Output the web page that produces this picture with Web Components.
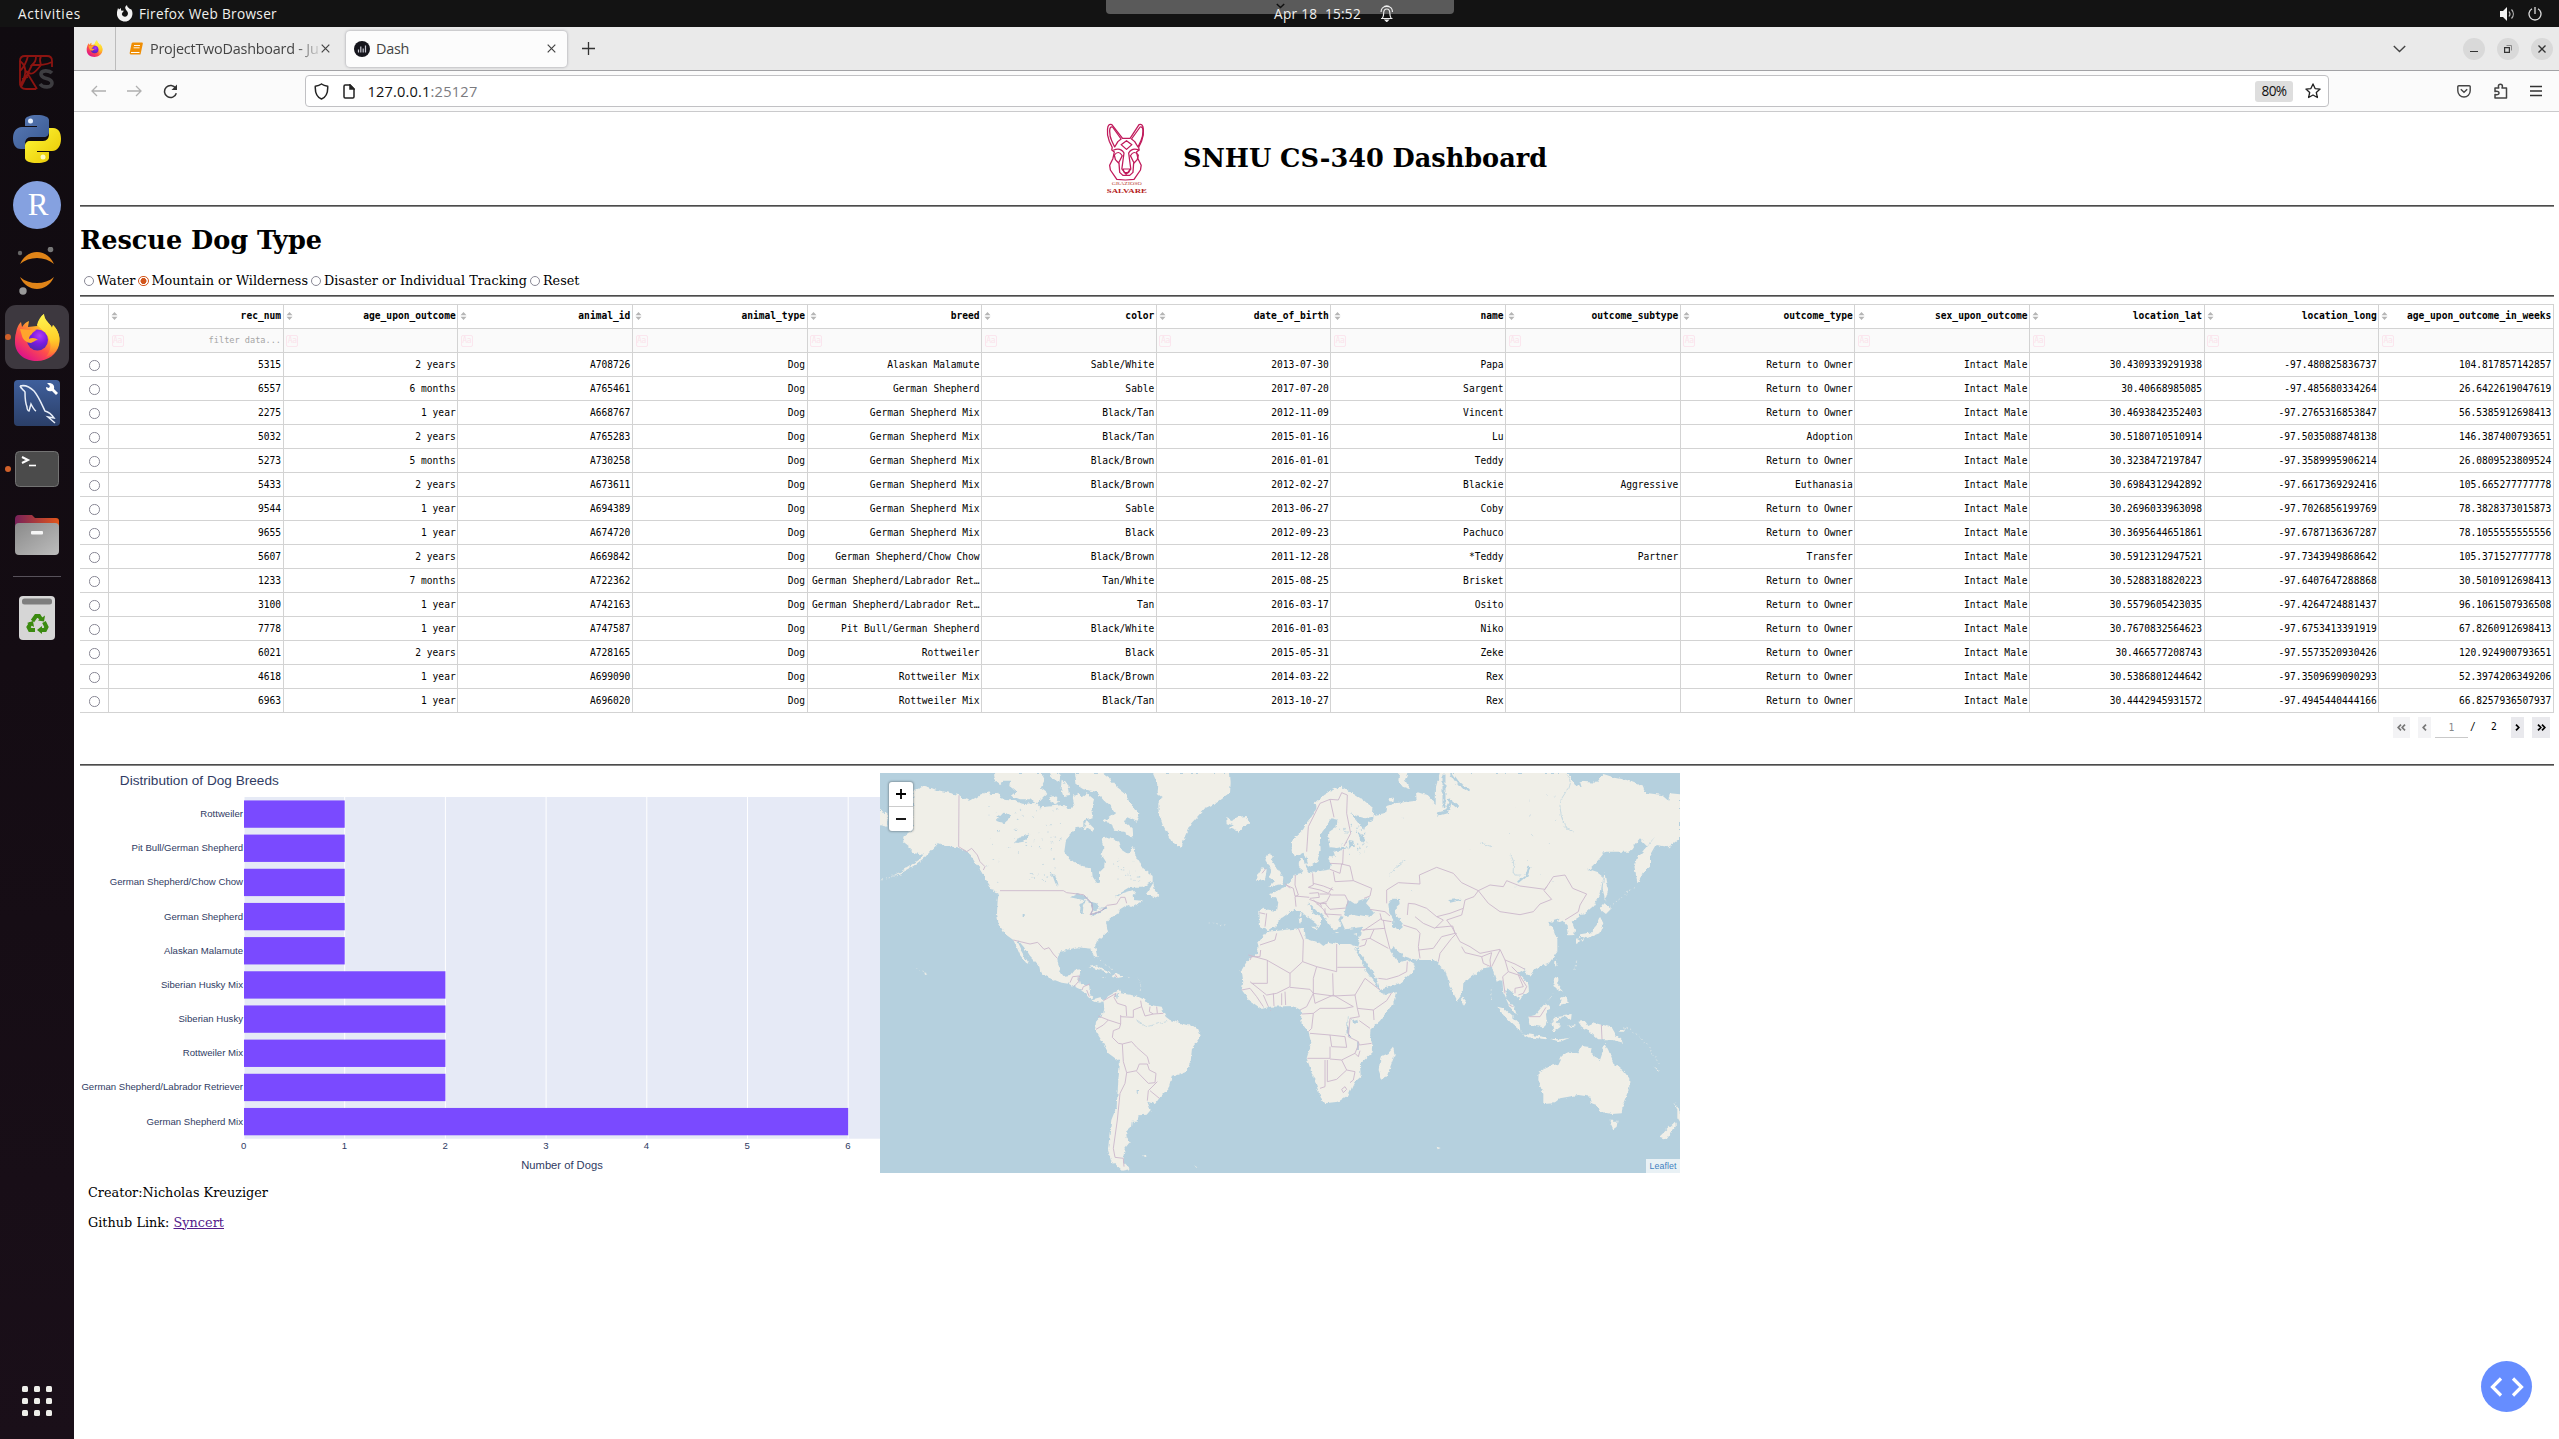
<!DOCTYPE html>
<html lang="en">
<head>
<meta charset="utf-8">
<title>Dash</title>
<style>
html,body{margin:0;padding:0;background:#fff;overflow:hidden}
body{width:2559px;height:1439px}
</style>
</head>
<body>
<ubuntu-desktop></ubuntu-desktop>
<script>
const UI = '"Open Sans","Noto Sans",sans-serif';

function define(name, render, after) {
  customElements.define(name, class extends HTMLElement {
    connectedCallback() {
      if (this.shadowRoot) return;
      const root = this.attachShadow({ mode: 'open' });
      const t = document.createElement('template');
      t.innerHTML = render(this);
      root.appendChild(t.content.cloneNode(true));
      if (after) after(this, root);
    }
  });
}

/* Text spread over a set width by its letter spacing */
define('fit-text', el => `<style>:host{display:block;width:${el.getAttribute('w')}px;white-space:pre;flex:none}span{display:inline-block}:host([underline]) span{text-decoration:underline}</style><span>${el.textContent}</span>`,
  (el, root) => {
    const s = root.querySelector('span');
    const w = +el.getAttribute('w'), n = s.textContent.length;
    s.style.letterSpacing = ((w - s.getBoundingClientRect().width) / n).toFixed(3) + 'px';
  });

const FIREFOX = `<svg viewBox="0 0 48 48">
<defs>
<linearGradient id="fx" x1=".85" y1=".1" x2=".25" y2=".95"><stop offset="0" stop-color="#fff044"/><stop offset=".35" stop-color="#ffb02a"/><stop offset=".65" stop-color="#ff4f4a"/><stop offset="1" stop-color="#e01587"/></linearGradient>
<linearGradient id="fy" x1=".5" y1="0" x2=".6" y2="1"><stop offset="0" stop-color="#fff44f"/><stop offset=".6" stop-color="#ffd02a"/><stop offset="1" stop-color="#ff9a1f" stop-opacity=".2"/></linearGradient>
<radialGradient id="fp" cx=".6" cy=".3" r=".75"><stop offset="0" stop-color="#b23cf5"/><stop offset=".5" stop-color="#7a1be0"/><stop offset="1" stop-color="#4b2ba8"/></radialGradient>
</defs>
<path fill="url(#fx)" d="M3 20C4 14 6 11 8 9l1 5c2-3 4-5 7-6l-1 6c3 0 6-1 9-1 2-4 3-9 7-12 0 5 4 8 7 12l1 2 1-3c5 5 8 12 6 20-2 9-11 16-22 16C12 48 2 41 2 29c0-4 0-6 1-9Z"/>
<path fill="url(#fy)" d="M24 12C25 7 28 3 31 1c0 5 4 8 7 12l1 2 1-3c6 6 8 14 5 22-3 6-8 9-12 10 4-5 6-11 3-18-2-5-7-9-12-14Z"/>
<circle cx="24.500" cy="27" r="10.500" fill="url(#fp)"/>
<path fill="#ffa52c" d="M7 16c4 0 7 1 10 1 2-1 5-1 6 0-1 1-4 3-4 4-2 1-3 3-3 5 3-2 7-1 9 1-3 0-4 2-7 3-4 0-8-3-9-7Z"/>
</svg>`;

/* ---------- Top panel ---------- */
define('top-panel', () => `<style>
:host{display:grid;grid-template-columns:1274px 1fr 200px;height:27px;background:#131313;color:#f0f0ee;font:13.6px/27px ${UI};position:relative}
.l{display:flex;align-items:center;padding-left:18px}
.c{display:flex;align-items:center;position:relative;z-index:1}
.r{display:flex;align-items:center;justify-content:flex-end;padding-right:17px;gap:12px}
svg{display:block;flex:none}
.l svg{margin:0 6px 0 36px}
.grab{position:absolute;left:1106px;top:0;width:348px;height:14px;background:#5a5a5a;border-radius:0 0 4px 4px}
.grab svg{position:absolute;left:170px;top:3px}
</style>
<div class="grab"><svg width="9" height="6" viewBox="0 0 9 6" fill="none" stroke="#111" stroke-width="1.500"><path d="M.8 1l3.700 3.500L8.200 1"/></svg></div>
<div class="l"><fit-text w="63">Activities</fit-text>
<svg style="margin-left:35px" width="17" height="17" viewBox="0 0 17 17"><path fill="#f2f2f2" d="M1 7l1-4 1 1.600L5 3v2.500l3 .3L6.500 7.600 5.800 9c.5 2 2 2.900 3.500 2.700 2-.3 3-2 2.600-3.900C11.500 6 9.500 5 9.200 3c0-1.200.6-2.200 1.800-3 0 1.800 1.500 2.600 2.900 3.900l1.300.3c1 1.500 1.500 3.500 1.200 5.300C15.800 13.800 12.800 16.500 9 16.500S1.500 13.800 1 10Z"/></svg>
<fit-text w="138">Firefox Web Browser</fit-text></div>
<div class="c"><fit-text w="87">Apr 18  15:52</fit-text>
<svg style="margin-left:18.500px" width="13.500" height="17" viewBox="0 0 13 17" fill="none" stroke="#eee" stroke-width="1.100" preserveAspectRatio="none"><path d="M1 13.500h11M2.200 13.500c1-1.500 1.300-3 1.300-5C3.500 5.500 4.600 4 6.500 4s3 1.500 3 4.500c0 2 .3 3.500 1.300 5M1 7C1 3.500 3 1.500 6.500 1.500S12 3.500 12 7M3 2.500C4 1.300 5 .8 6.500.8S9 1.300 10 2.500"/><path d="M5 15h3l-1.500 1.600Z" fill="#fff"/></svg></div>
<div class="r">
<svg width="16" height="14" viewBox="0 0 16 14"><path fill="#f2f2f2" d="M0 4h3l4-4v14l-4-4H0Z"/><path d="M9 4.500c1.200 1.500 1.200 3.500 0 5M11.500 2.500c2.400 2.600 2.400 6.400 0 9" stroke="#bbb" fill="none" stroke-width="1.200"/></svg>
<svg width="14" height="14" viewBox="0 0 14 14" fill="none" stroke="#ddd" stroke-width="1.300"><path d="M4 1.800a6 6 0 1 0 6 0M7 0v7"/></svg>
</div>`);

/* ---------- Dock ---------- */
define('dock-item', () => `<style>
:host{display:flex;height:66px;width:74px;align-items:center;justify-content:center;flex:none;position:relative}
.tile{width:64px;height:64px;display:flex;align-items:center;justify-content:center;border-radius:11px}
:host([active]) .tile{background:#3d383f}
.dot{position:absolute;left:5px;top:30px;width:6px;height:6px;border-radius:3px;background:#d0602a;display:none}
:host([running]) .dot{display:block}
</style><div class="tile"><slot></slot></div><div class="dot"></div>`);

define('side-dock', () => `<style>
:host{display:flex;flex-direction:column;width:74px;height:1412px;box-sizing:border-box;padding-top:13px;background:linear-gradient(#100b10,#140c13 45%,#1a0f19);flex:none}
svg{display:block;width:48px;height:48px}
.sep{height:1px;background:#57515a;margin:8px 13px}
.gap{flex:1}
.apps{display:grid;grid-template-columns:repeat(3,6px);gap:6px;justify-content:center;padding-bottom:23px}
.apps i{height:6px;border-radius:1.500px;background:#eeeeea}
</style>
<dock-item><svg viewBox="0 0 48 48" fill="none"><g stroke="#8c1411" stroke-width="1.800"><path d="M39 18V12c0-3-2-5-5-5H12C9 7 7 9 7 12v22c0 4 2 6 6 6h10" /><path d="M7 12c8 6 6 16 0 24M15 7c-2 8-5 12-8 15M23 7c0 5-1 6-4 9 9 0 14 0 20-3M19 16L8 38M13 22l11 18M28 7c-2 4-1 6 0 9M13 22c5 5 8 3 15-6M9 30l6-2"/></g><path d="M39 24c-3-3-11-3-11 1 0 6 11 3 11 9 0 5-9 5-12 1" stroke="#3d3c40" stroke-width="3.600"/></svg></dock-item>
<dock-item><svg viewBox="0 0 48 48"><defs><linearGradient id="pb" x1="0" y1="0" x2="1" y2="1"><stop offset="0" stop-color="#5a7cb8"/><stop offset="1" stop-color="#38578f"/></linearGradient><linearGradient id="py" x1="0" y1="0" x2="1" y2="1"><stop offset="0" stop-color="#fffa3a"/><stop offset="1" stop-color="#e8c400"/></linearGradient></defs><path fill="url(#pb)" d="M12 5c0-3 5-5 12-5s12 2 12 5v12c0 3-2 5-5 5H18c-4 0-6 3-6 7v5H8c-6 0-8-5-8-11s3-11 9-11h15v-1H12Z"/><path fill="url(#py)" d="M36 43c0 3-5 5-12 5s-12-2-12-5V31c0-3 2-5 5-5h13c4 0 6-3 6-7v-6h4c6 0 8 5 8 11s-3 12-9 12H24v1h12Z"/><circle cx="17.500" cy="6" r="2.500" fill="#e8f2ff"/><circle cx="30" cy="42" r="2.500" fill="#fffbc0"/></svg></dock-item>
<dock-item><svg viewBox="0 0 48 48"><circle cx="24" cy="24" r="24" fill="#85a1e0"/><text x="25" y="34" text-anchor="middle" font-family="Liberation Serif,serif" font-size="31" fill="#fff">R</text></svg></dock-item>
<dock-item><svg viewBox="0 0 48 48"><path fill="#e08418" d="M7 17C14 1 34 1 41 17 32 9 16 9 7 17ZM7 30c7 16 27 16 34 0-9 8-25 8-34 0Z"/><circle cx="7" cy="6" r="2.200" fill="#666"/><circle cx="37.500" cy="2.500" r="2.800" fill="#777"/><circle cx="10" cy="44" r="3.700" fill="#999"/></svg></dock-item>
<dock-item active running>${FIREFOX}</dock-item>
<dock-item><svg viewBox="0 0 48 48"><defs><linearGradient id="mq" x1="0" y1="0" x2="0" y2="1"><stop offset="0" stop-color="#3f5f9c"/><stop offset="1" stop-color="#2b3f68"/></linearGradient></defs><rect x="1" y="1" width="46" height="46" rx="4" fill="url(#mq)"/><path d="M7 7c4-1 9 0 14 5 5 6 8 14 11 20 4 1 7 4 9 7l-6-1 7 6M7 7c1 3 4 4 5 6 0 5 0 10 2 15 0 2 1 4 2 4l2-7c2 4 3 6 5 7M7 7l3 4" fill="none" stroke="#e8eef8" stroke-width="1.500"/><path d="M34 4l3 3-1 2-3-1c0 4 3 5 6 4l4 4 2-2-4-4c1-4-2-6-5-6Z" fill="#fff"/></svg></dock-item>
<dock-item running><svg viewBox="0 0 48 48"><rect x="2.500" y="6.500" width="43" height="35" rx="4" fill="#4b4b4b" stroke="#737373"/><path d="M9 12l6 3-6 3" fill="none" stroke="#fff" stroke-width="2"/><path d="M16 20.500h7" stroke="#fff" stroke-width="1.600"/></svg></dock-item>
<dock-item><svg viewBox="0 0 48 48"><defs><linearGradient id="fo"><stop offset="0" stop-color="#77215a"/><stop offset="1" stop-color="#e2561b"/></linearGradient><linearGradient id="fg" x1="0" y1="0" x2="1" y2="1"><stop offset="0" stop-color="#8a8a8a"/><stop offset="1" stop-color="#bdbdbd"/></linearGradient></defs><path d="M2 20V8c0-2 1-4 4-4h13l3 3h21c2 0 3 1 3 3v12Z" fill="url(#fo)"/><rect x="2" y="12" width="44" height="32" rx="4" fill="url(#fg)"/><rect x="18" y="20" width="12" height="3.500" rx="1" fill="#f6f6f6"/></svg></dock-item>
<div class="sep"></div>
<dock-item><svg viewBox="0 0 48 48"><rect x="6" y="2" width="36" height="44" rx="4" fill="#d6d6d6"/><rect x="9" y="4.500" width="30" height="6" rx="2.500" fill="#7e7e7e"/><g fill="none" stroke="#3b8a10" stroke-width="4"><path d="M19.500 27l3.500-5h3l2 3M31 28l2.500 5-1.500 3h-4M22 36h-5l-1.500-3 2.500-4"/></g><g fill="#3b8a10"><path d="M25 26.500l6 1 1-6ZM29 32v8l-5-4ZM14 29l6-2 1 6Z"/></g></svg></dock-item>
<div class="gap"></div>
<div class="apps">${'<i></i>'.repeat(9)}</div>`);

/* ---------- Browser chrome ---------- */
const X = '<svg class="x" width="9" height="9" viewBox="0 0 9 9" stroke="#444" stroke-width="1.200"><path d="M.7.7l7.600 7.600M8.300.7L.7 8.300"/></svg>';
define('browser-tabs', () => `<style>
:host{display:flex;height:43px;background:#eaeaea;border-bottom:1px solid #a3a3a6;color:#444;font:14.400px/22px ${UI};align-items:center;position:relative}
svg{display:block;flex:none}
.pin{width:42px;height:43px;border-right:1px solid #bcbcbc;display:flex;align-items:center;justify-content:center;box-sizing:border-box}
.pin svg{width:17px;height:17px}
.tab{display:flex;align-items:center;box-sizing:border-box}
.t1{width:222px;padding-left:13px;margin-right:8px}
.t1 .n{width:169px;margin-left:7px;-webkit-mask-image:linear-gradient(90deg,#000 86%,rgba(0,0,0,.15));color:#444}
.t1 .x{margin-left:2px}
.t2{width:221px;height:36px;background:#fcfcfc;border-radius:4px;box-shadow:0 0 3px #9a9aa0;padding-left:8px}
.t2 fit-text{margin-left:6px}.t2 .x{margin-left:138px}
.plus{margin-left:15px}
.end{margin-left:auto;display:flex;align-items:center;padding-right:6px}
.b{width:22px;height:22px;border-radius:11px;background:#d9d9d9;display:flex;align-items:center;justify-content:center;margin-left:12px}
</style>
<div class="pin">${FIREFOX}</div>
<div class="tab t1"><svg width="14" height="14" viewBox="0 0 14 14"><path d="M4 .5h9a1 1 0 0 1 .8 1.200L11.500 12.500H2.200A1.500 1.500 0 0 1 .7 10.800L2.600 1.600A1.500 1.500 0 0 1 4 .5Z" fill="#ef8e05"/><path d="M5 3.500h6M4.600 5.800h6" stroke="#fff" stroke-width=".9"/><path d="M2 10.500h8.500" stroke="#fff"/></svg>
<div class="n"><fit-text w="168.500">ProjectTwoDashboard - Ju</fit-text></div>${X}</div>
<div class="tab t2"><svg width="16" height="16" viewBox="0 0 16 16"><circle cx="8" cy="8" r="8" fill="#15151c"/><path d="M4.500 11.500v-3M6.800 11.500v-6M9.200 11.500v-4M11.500 11.500v-7" stroke="#c9c9d2" stroke-width="1.200"/></svg><fit-text w="33">Dash</fit-text>${X}</div>
<svg class="plus" width="13" height="13" viewBox="0 0 13 13" stroke="#333" stroke-width="1.300"><path d="M6.500 0v13M0 6.500h13"/></svg>
<div class="end"><svg width="13" height="8" viewBox="0 0 13 8" fill="none" stroke="#444" stroke-width="1.400" style="margin-right:45px"><path d="M.8 1l5.700 5.500L12.200 1"/></svg>
<div class="b"><svg width="8" height="8" viewBox="0 0 8 8"><path d="M0 6.500h8" stroke="#333"/></svg></div>
<div class="b"><svg width="8" height="8" viewBox="0 0 8 8" fill="none"><path d="M2.500.5h5v5" stroke="#8a8a8a"/><path d="M.6 2.600h4.800v4.800H.6Z" stroke="#333" stroke-width="1.200"/></svg></div>
<div class="b"><svg width="8" height="8" viewBox="0 0 8 8" stroke="#333" stroke-width="1.300"><path d="M.5.5l7 7M7.500.5l-7 7"/></svg></div></div>`);

define('browser-toolbar', () => `<style>
:host{display:flex;height:40px;background:#fbfbfb;border-bottom:1px solid #cacacc;align-items:center;font:14.600px/22px ${UI};color:#111}
svg{display:block;flex:none}
.nav{display:flex;gap:21px;padding-left:16.500px;width:231px;box-sizing:border-box;align-items:center}
.url{width:2024px;height:32px;box-sizing:border-box;border:1px solid #c1c1c4;border-radius:4px;background:#fff;display:flex;align-items:center;padding-left:8px}
.g{color:#7b7b7f}
.badge{margin-left:auto;background:#dedede;border-radius:3px;width:38px;height:21px;line-height:20px;font-size:13.600px;display:flex;justify-content:center}
.end{display:flex;align-items:center;margin-left:auto;padding-right:17px;gap:22.500px}
</style>
<div class="nav">
<svg width="15" height="12" viewBox="0 0 15 12" fill="none" stroke="#b0b0b0" stroke-width="1.300"><path d="M15 6H1M6 1L1 6l5 5"/></svg>
<svg width="15" height="12" viewBox="0 0 15 12" fill="none" stroke="#b0b0b0" stroke-width="1.300"><path d="M0 6h14M9 1l5 5-5 5"/></svg>
<svg width="15" height="15" viewBox="0 0 15 15" fill="none" stroke="#333" stroke-width="1.500"><path d="M12.700 4.500A6 6 0 1 0 13.300 9.200"/><path d="M14 .5V6H8.500Z" fill="#333" stroke="none"/></svg>
</div>
<div class="url">
<svg width="15" height="17" viewBox="0 0 15 17" fill="none" stroke="#222" stroke-width="1.500"><path d="M7.500 1c2 1.500 4 2 6.200 2.300C14 9 12.500 14 7.500 16 2.500 14 1 9 1.300 3.300 3.500 3 5.500 2.500 7.500 1Z"/></svg>
<svg style="margin:0 12.500px 0 14px" width="12" height="15" viewBox="0 0 12 15" fill="none" stroke="#222" stroke-width="1.500"><path d="M7 1H2.200A1.200 1.200 0 0 0 1 2.200v10.600A1.200 1.200 0 0 0 2.200 14h7.600a1.200 1.200 0 0 0 1.200-1.200V5Z"/><path d="M7 1v4h4Z" fill="#222"/></svg>
<fit-text w="63">127.0.0.1</fit-text><fit-text class="g" w="47">:25127</fit-text>
<div class="badge"><fit-text w="25">80%</fit-text></div>
<svg style="margin:0 7px 0 12px" width="16" height="16" viewBox="0 0 16 16" fill="none" stroke="#222" stroke-width="1.300" stroke-linejoin="round"><path d="M8 .9l2.100 4.700 5 .5-3.800 3.400 1.100 5L8 12l-4.400 2.500 1.100-5L.9 6.100l5-.5Z"/></svg>
</div>
<div class="end">
<svg width="14" height="13" viewBox="0 0 14 13" fill="none" stroke="#444" stroke-width="1.400"><path d="M1.800 .8h10.400a1 1 0 0 1 1 1v4a6.200 6.200 0 0 1-12.400 0v-4a1 1 0 0 1 1-1Z"/><path d="M3.800 4.300L7 7.300l3.200-3"/></svg>
<svg width="14" height="16" viewBox="0 0 14 16" fill="none" stroke="#444" stroke-width="1.500" stroke-linejoin="round"><path d="M1 5h3.800c-.3-.7-.4-1.200-.4-1.700a2 2 0 0 1 4 0c0 .5-.1 1-.4 1.700h4.500v10H1v-3.500c3 .9 4-.5 4-1.500s-1-2.300-4-1.500Z"/></svg>
<svg width="12" height="12" viewBox="0 0 12 12" stroke="#333" stroke-width="1.300"><path d="M0 1.500h12M0 6h12M0 10.500h12"/></svg>
</div>`);

/* ---------- Page header ---------- */
define('salvare-logo', () => `<style>:host{display:block;width:43px;height:73px;flex:none}svg{display:block}</style>
<svg width="43" height="73" viewBox="183 363 120 219" preserveAspectRatio="none"><g fill="none" stroke="#c01a5b" stroke-width="3.600" stroke-linejoin="round">
<path d="M232 412L202 371q-11-4-12 14-2 18 5 36l8 18-1 8 7 6-4 20-9 20 2 14 18 28 24 2 24-2 18-28 2-14-9-20-4-20 7-6-1-8 8-18q7-18 5-36-1-18-12-14L253 412Z"/>
<path d="M228 414L204 378q-8-2-8 12 0 18 6 30l8 18 9-16ZM257 414l24-36q8-2 8 12 0 18-6 30l-8 18-9-16Z"/>
<path d="M243 419l15 12-15 14-15-14ZM206 448q20-10 30 8l-6 48 12 16 13-16-6-48q10-18 30-8M209 462q12-16 22 2l-10 22-9-10ZM276 462q-12-16-22 2l10 22 9-10Z"/>
<path d="M222 486l2 28 9 9h19l9-9 2-28M233 504h20l-4 11h-12Z"/></g>
<text x="202" y="552.500" font-family="Liberation Serif,serif" font-size="11.500" textLength="84" lengthAdjust="spacingAndGlyphs" fill="#bb3d37">GRAZIOSO</text>
<text x="188" y="576" font-family="Liberation Serif,serif" font-weight="bold" font-size="20" textLength="112" lengthAdjust="spacingAndGlyphs" fill="#b5201c">SALVARE</text></svg>`);

/* ---------- Radio ---------- */
define('radio-dot', () => `<style>
:host{display:block;width:10.400px;height:10.400px;box-sizing:border-box;border:1px solid #8a8996;border-radius:50%;background:#fff;flex:none}
:host([checked]){border:1.600px solid #d2561c;background:radial-gradient(circle,#d2561c 2.700px,#fff 3.300px)}
</style>`);

define('rescue-filter', () => `<style>
:host{display:flex;align-items:center;height:20px;font:12.800px/20px "DejaVu Serif",serif;color:#000}
radio-dot{margin:1px 2.600px 0 3px}
radio-dot:first-of-type{margin-left:4px}
</style>
<radio-dot></radio-dot><fit-text w="38.500">Water</fit-text>
<radio-dot checked></radio-dot><fit-text w="156.500">Mountain or Wilderness</fit-text>
<radio-dot></radio-dot><fit-text w="203">Disaster or Individual Tracking</fit-text>
<radio-dot></radio-dot><fit-text w="36.500">Reset</fit-text>`);

/* ---------- Data table ---------- */
const COLS = ['rec_num','age_upon_outcome','animal_id','animal_type','breed','color','date_of_birth','name','outcome_subtype','outcome_type','sex_upon_outcome','location_lat','location_long','age_upon_outcome_in_weeks'];
const GS = 'German Shepherd', R = 'Return to Owner';
const ROWS = [
['5315','2 years','A708726','Alaskan Malamute','Sable/White','2013-07-30','Papa','',R,'30.4309339291938','-97.480825836737','104.817857142857'],
['6557','6 months','A765461',GS,'Sable','2017-07-20','Sargent','',R,'30.40668985085','-97.485680334264','26.6422619047619'],
['2275','1 year','A668767',GS+' Mix','Black/Tan','2012-11-09','Vincent','',R,'30.4693842352403','-97.2765316853847','56.5385912698413'],
['5032','2 years','A765283',GS+' Mix','Black/Tan','2015-01-16','Lu','','Adoption','30.5180710510914','-97.5035088748138','146.387400793651'],
['5273','5 months','A730258',GS+' Mix','Black/Brown','2016-01-01','Teddy','',R,'30.3238472197847','-97.3589995906214','26.0809523809524'],
['5433','2 years','A673611',GS+' Mix','Black/Brown','2012-02-27','Blackie','Aggressive','Euthanasia','30.6984312942892','-97.6617369292416','105.665277777778'],
['9544','1 year','A694389',GS+' Mix','Sable','2013-06-27','Coby','',R,'30.2696033963098','-97.7026856199769','78.3828373015873'],
['9655','1 year','A674720',GS+' Mix','Black','2012-09-23','Pachuco','',R,'30.3695644651861','-97.6787136367287','78.1055555555556'],
['5607','2 years','A669842',GS+'/Chow Chow','Black/Brown','2011-12-28','*Teddy','Partner','Transfer','30.5912312947521','-97.7343949868642','105.371527777778'],
['1233','7 months','A722362',GS+'/Labrador Ret…','Tan/White','2015-08-25','Brisket','',R,'30.5288318820223','-97.6407647288868','30.5010912698413'],
['3100','1 year','A742163',GS+'/Labrador Ret…','Tan','2016-03-17','Osito','',R,'30.5579605423035','-97.4264724881437','96.1061507936508'],
['7778','1 year','A747587','Pit Bull/'+GS,'Black/White','2016-01-03','Niko','',R,'30.7670832564623','-97.6753413391919','67.8260912698413'],
['6021','2 years','A728165','Rottweiler','Black','2015-05-31','Zeke','',R,'30.466577208743','-97.5573520930426','120.924900793651'],
['4618','1 year','A699090','Rottweiler Mix','Black/Brown','2014-03-22','Rex','',R,'30.5386801244642','-97.3509699090293','52.3974206349206'],
['6963','1 year','A696020','Rottweiler Mix','Black/Tan','2013-10-27','Rex','',R,'30.4442945931572','-97.4945440444166','66.8257936507937']
].map(r => [...r.slice(0,3),'Dog',...r.slice(3,9),'Intact Male',...r.slice(9)]);

define('animal-table', () => `<style>
:host{display:block;width:2474px;border-top:1px solid #d3d3d3;font:9.600px/24px "DejaVu Sans Mono",monospace;color:#000}
.row{display:grid;grid-template-columns:29px repeat(14,1fr);height:24px;box-sizing:border-box;border-bottom:1px solid #d3d3d3}
.row>*{border-right:1px solid #d3d3d3;box-sizing:border-box;display:flex;align-items:center;padding:0 1.600px;min-width:0;white-space:pre;line-height:23px;height:23px}
.row>*>b,.row>*>span{margin-left:auto;font-weight:inherit}
.row>:first-child{justify-content:center}
.h{font-weight:bold}.h>*{line-height:23px;padding-bottom:2px}
.f{background:#fafafa;color:#a5a5a5}.f>*{padding-bottom:1px}.f span{font-size:8.600px}
radio-dot{margin-top:2px}
.row>:first-child{padding:0 0 0 1px}
svg{display:block;flex:none}
.s{margin-left:.5px}
.aa{width:12px;height:12px;box-sizing:border-box;border:1px solid #fbe6ee;border-radius:2px;color:#fae3eb;font:8px/10px "DejaVu Sans Mono",monospace;text-align:center;margin:1px 0 0 1px;letter-spacing:-.3px}
</style>
<div class="row h"><div></div>${COLS.map(c => `<div><svg class="s" width="7" height="8" viewBox="0 0 7 8" fill="#b5b5b5"><path d="M3.500 0L6.500 3.300H.5ZM.5 4.700h6L3.500 8Z"/></svg><b>${c}</b></div>`).join('')}</div>
<div class="row f"><div></div>${COLS.map((c,i) => `<div><div class="aa">Aa</div>${i ? '' : '<span>filter data...</span>'}</div>`).join('')}</div>
${ROWS.map(r => `<div class="row"><div><radio-dot></radio-dot></div>${r.map(v => `<div><span>${v}</span></div>`).join('')}</div>`).join('')}`);

define('table-pager', () => `<style>
:host{display:flex;justify-content:flex-end;height:21px;padding-right:4px;font:9.600px/20px "DejaVu Sans Mono",monospace;align-items:stretch;width:2474px;box-sizing:border-box}
.b{background:#e9e9ed;display:flex;align-items:center;justify-content:center;width:13px}
.w{width:18px}
.d{background:#f3f3f5}
.in{width:33px;border-bottom:1px solid #c9c9c9;margin-left:4px;text-align:center;color:#888;height:20px;line-height:22px}
</style>
<div class="b d" style="width:17px"><svg width="9" height="7" viewBox="0 0 9 7" fill="none" stroke="#777" stroke-width="1.700"><path d="M4 .6L1.200 3.500 4 6.400M8 .6L5.200 3.500 8 6.400"/></svg></div>
<div class="b d" style="margin-left:8px"><svg width="5" height="7" viewBox="0 0 5 7" fill="none" stroke="#777" stroke-width="1.700"><path d="M4 .6L1.200 3.500 4 6.400"/></svg></div>
<div class="in">1</div><div style="margin-left:2px;width:6px">/</div><div style="margin:0 14px 0 15px;width:6px">2</div>
<div class="b"><svg width="5" height="7" viewBox="0 0 5 7" fill="none" stroke="#000" stroke-width="1.700"><path d="M1 .6l2.800 2.900L1 6.400"/></svg></div>
<div class="b w" style="margin-left:8px"><svg width="9" height="7" viewBox="0 0 9 7" fill="none" stroke="#000" stroke-width="1.700"><path d="M1 .6l2.800 2.900L1 6.400M5 .6l2.800 2.900L5 6.400"/></svg></div>`);

/* ---------- Bar chart ---------- */
const BREEDS = [['Rottweiler',1],['Pit Bull/German Shepherd',1],['German Shepherd/Chow Chow',1],['German Shepherd',1],['Alaskan Malamute',1],['Siberian Husky Mix',2],['Siberian Husky',2],['Rottweiler Mix',2],['German Shepherd/Labrador Retriever',2],['German Shepherd Mix',6]];
define('breed-chart', () => {
  const x0 = 164, step = 100.7, top = 24, rh = 34.17;
  return `<style>:host{display:block;width:800px;height:400px;flex:none}svg{display:block}text{font-family:"Liberation Sans",Arial,sans-serif;fill:#303b63}</style>
<svg width="800" height="400"><rect x="164" y="${top}" width="636" height="341.700" fill="#e6eaf6"/>
${[0,1,2,3,4,5,6].map(i => `<path d="M${x0+i*step} ${top}v341.700" stroke="#fff" stroke-width="1"/>`).join('')}
${BREEDS.map(([n,v],i) => `<rect x="${x0}" y="${(top+rh*i+rh*.1).toFixed(2)}" width="${v*step}" height="${(rh*.8).toFixed(2)}" fill="#7a4aff"/><text x="163" y="${(top+rh*(i+.5)+3).toFixed(2)}" font-size="9.600" text-anchor="end">${n}</text>`).join('')}
${[0,1,2,3,4,5,6].map(i => `<text x="${x0+i*step-.3}" y="375.600" font-size="9.600" text-anchor="middle">${i}</text>`).join('')}
<text x="39.800" y="12" font-size="13.600" textLength="159">Distribution of Dog Breeds</text>
<text x="482" y="395.500" font-size="11.200" text-anchor="middle" textLength="81.500">Number of Dogs</text></svg>`;
});

/* ---------- World map ---------- */
/* Shapes are kept in thirds of a pixel; the eastern sheet starts 1200 units after the western one. */
const WEST = `30,145 40,158 52,160 52,200 30,196
130,90 145,86 158,76 178,82 200,90 232,97 268,106 285,118 300,122 320,112 330,104 355,94 362,106 385,98 392,118 430,122 460,132 500,128 512,142 550,138 580,135 600,150 612,130 608,112 622,98 635,112 650,100 672,118 664,150 668,172 640,180 640,200 620,205 600,225 588,240 583,275 598,298 620,308 640,322 665,325 668,350 680,368 690,362 690,335 705,320 708,305 695,285 700,265 695,235 720,232 745,245 752,268 770,280 780,280 788,260 800,295 820,325 848,348 848,365 820,380 780,380 750,398 735,415 758,400 790,390 798,398 788,408 790,420 820,422 790,440 775,432 750,448 745,460 720,475 708,488 714,515 680,545 675,560 683,595 672,590 664,566 620,562 600,568 570,575 562,600 568,630 580,648 600,645 612,630 635,628 625,655 630,672 658,678 660,705 670,718 690,712 704,722 690,728 675,725 655,712 640,692 622,684 600,672 575,668 540,655 512,640 508,620 480,590 462,562 448,545 440,545 452,570 464,590 480,614 468,608 450,585 440,562 430,540 405,522 385,490 381,460 383,420 386,402 362,380 345,355 325,325 302,285 285,270 260,262 225,258 205,250 185,270 165,292 130,318 90,340 62,350 90,336 122,316 150,298 160,284 125,278 125,265 100,245 100,230 118,215 130,210
372,39 375,60 390,72 405,62 420,62 418,78 440,95 425,108 450,118 480,118 500,132 520,110 532,100 512,85 524,60 515,39
540,39 550,60 568,66 572,45 565,39
575,62 595,75 600,105 580,108 572,85
615,39 620,75 640,88 680,95 700,120 722,140 735,160 700,185 725,190 732,212 760,215 790,235 788,205 765,185 772,172 800,185 808,160 780,130 765,100 740,80 715,50 700,39
535,112 555,108 570,125 550,135
640,112 655,105 665,130 640,160
650,180 662,195 672,205 668,215 650,205 640,210
848,39 862,70 860,100 876,112 865,130 866,160 880,200 905,245 935,265 942,235 962,192 1005,145 1040,128 1080,100 1082,70 1080,39
1068,172 1085,180 1105,170 1130,168 1137,188 1105,215 1080,205 1088,196 1070,190
826,405 840,385 850,368 855,392 868,408 860,415 845,405
353,374 372,384 390,402 370,395
652,622 680,616 720,636 722,642 698,632 670,624
725,648 740,640 762,650 742,654 728,652
695,650 708,652 700,654
770,649 780,650 775,654
700,722 715,708 738,695 750,690 752,700 800,708 825,720 838,735 875,740 887,770 900,780 950,795 968,797 985,808 992,828 966,865 962,905 948,936 905,952 895,985 870,1012 855,1032 832,1025 842,1050 830,1064 805,1066 803,1085 785,1085 783,1102 768,1115 770,1130 780,1145 765,1165 760,1190 763,1208 782,1227 755,1232 725,1205 714,1170 718,1130 724,1080 740,1040 745,960 750,905 715,880 700,850 675,810 678,785 700,760 703,740
1196,280 1212,290 1205,300 1218,320 1240,352 1238,372 1195,380 1212,362 1197,352 1205,332 1186,300
1162,345 1175,325 1190,328 1186,358 1162,364
815,1190 832,1187 828,1194
163,637 172,643 165,645
972,1216 985,1224 980,1224`;
const EAST = `-32,450 -20,446 18,453 22,425 15,412 0,410 -2,402 25,392 48,378 65,362 72,345 95,338 100,332 87,322 86,305 100,293 105,318 115,335 130,338 155,332 182,328 185,314 175,300 178,288 195,290 190,275 218,270 235,258 200,264 180,262 174,240 178,215 200,200 202,182 182,178 165,205 150,225 150,245 152,270 142,305 118,320 108,290 100,278 75,290 65,270 66,240 100,208 112,185 128,165 140,140 130,132 160,105 190,88 215,80 245,98 280,120 310,145 308,170 285,175 250,165 240,158 265,190 282,208 295,188 310,178 310,165 345,160 350,138 375,130 440,122 438,95 470,105 497,132 498,80 510,39 895,39 915,75 935,82 930,65 980,68 1000,42 1040,55 1070,60 1120,80 1125,98 1175,105 1195,122 1200,100 1230,103 1230,235 1195,262 1160,255 1140,290 1140,320 1118,338 1103,370 1093,322 1100,295 1120,275 1140,250 1155,230 1130,258 1110,238 1095,255 1080,275 1005,275 985,300 955,330 985,340 1000,352 992,400 970,438 945,460 930,462 928,470 905,485 915,510 912,525 897,526 893,500 878,482 862,490 868,475 850,480 838,490 848,502 862,540 862,575 835,612 805,622 790,630 775,650 765,628 742,640 775,670 777,695 748,718 730,700 712,685 705,712 735,745 740,768 718,738 700,700 697,660 680,668 665,620 640,625 580,668 578,700 562,722 540,680 525,630 510,620 495,600 450,600 430,598 400,588 370,562 360,572 385,608 412,600 438,618 425,640 392,668 330,690 322,660 290,610 268,575 262,560 272,515 280,500 225,508 212,480 225,472 212,468 205,480 215,495 195,510 180,500 160,465 140,452 115,430 125,455 155,475 150,490 142,502 138,488 105,465 92,452 75,450 52,462 30,478 15,502 -8,510 -30,502
-10,515 25,512 85,505 100,505 105,535 150,550 160,558 175,545 200,552 240,552 262,560 256,570 268,590 290,635 318,672 328,695 345,702 378,697 370,730 330,782 302,808 300,825 307,850 305,880 270,912 272,950 252,968 235,1005 205,1025 165,1030 152,1012 130,950 110,895 124,850 115,815 95,790 92,750 70,738 0,740 -25,747 -60,722 -85,690 -80,665 -85,630 -70,605 -38,578 -38,552
370,862 374,885 350,950 335,957 326,930 332,890 355,880
577,710 590,725 582,737 576,728
1003,430 1025,445 1008,462 990,448
990,470 1000,490 988,520 950,535 935,530 920,538 935,522 960,518 980,495
918,535 930,542 924,552 918,548
930,540 942,535 940,542
1003,335 1008,365 1015,390 1005,422 998,385
860,598 862,608 855,622 852,612
775,640 790,640 780,650
853,650 865,655 865,680 880,695 868,690 850,678
866,715 890,708 893,730 870,735 875,722
850,700 832,725 848,706
682,740 700,745 752,792 754,815 730,795 700,765
752,820 790,826 830,832 830,838 775,832
840,836 870,838 900,833 870,845
775,770 795,765 825,730 840,742 828,762 830,785 820,802 782,795
845,790 855,772 882,768 858,784 872,800 852,815
925,785 945,782 955,798 975,788 1025,802 1040,828 1060,848 1018,838 985,838 955,812 935,800
1045,815 1070,800 1062,815
880,765 905,762 903,780
893,800 918,795 910,802
806,935 830,920 865,912 880,882 900,875 920,880 935,858 965,862 962,880 990,900 997,880 1003,848 1015,870 1030,908 1060,932 1078,955 1078,985 1058,1035 1055,1060 1025,1062 990,1055 980,1035 965,1030 962,1010 925,1005 870,1015 850,1030 820,1032 820,1005 805,960
1018,1082 1043,1082 1040,1100 1030,1108
1168,1130 1215,1085 1218,1098 1190,1138
1213,1028 1225,1045 1230,1060 1230,1085 1222,1072 1222,1050
388,39 412,39 405,60 420,88 398,80 385,62
355,115 372,113 370,125 358,124
88,455 95,458 94,468 88,466
86,475 96,474 95,490 88,490
120,500 140,500 138,508
190,517 208,520 200,522
250,522 265,518 258,525
105,310 118,312 112,322
500,1160 512,1164 503,1168
1150,918 1170,932 1162,930`;
const WEST_BORDERS = `267,106 266,260 290,275 305,265 322,285 330,305 345,320 340,330
390,392 580,392 590,398 640,404 665,430 668,450 660,464 690,455 712,436 740,432 752,412 765,412 770,430
430,540 480,552 503,547 522,568 537,563 550,582 562,595
600,668 608,650 628,648 625,665 612,680
636,690 640,680 660,672 
658,710 650,690
700,722 738,700 732,712 742,730 768,738 770,768
752,770 790,772 790,750 815,740 812,722
815,740 825,768 850,762 880,760
840,740 838,755 850,762
860,740 862,760
685,768 715,780 752,792 752,765
678,808 700,795 715,780
752,792 748,805 730,812 727,832 745,850 757,852 785,845 800,862 832,890 838,912
757,852 760,905 770,938 765,970 750,1000 742,1080 730,1165 735,1192 760,1195 762,1220
770,938 800,932 808,912 832,912 838,930 858,940 855,968 835,970 800,934
835,992 862,965
835,992 832,1022
840,992 868,1015
1190,460 1185,500
1168,458 1186,462
1176,340 1188,325
735,643 742,653
1245,370 1260,385`;
const EAST_BORDERS = `110,275 115,200 150,130 180,118 192,172
180,118 205,120 215,98 232,105 230,160 242,220 222,258
220,268 218,312 180,310
180,328 210,340 215,312 240,318 250,362 195,365 190,335
250,362 305,385 300,408 282,415
187,382 175,400 150,390 115,382 130,375 128,340
130,370 160,378 190,390
76,345 75,375 85,405 75,410 78,440
48,375 70,385 75,408 118,412
118,400 145,398 148,412 120,415
148,402 182,402 170,425 150,430 118,418
182,405 225,405 235,425 228,440
165,430 180,448 228,444
165,445 165,462 215,465
130,420 160,448 175,472
140,432 170,430
155,440 150,430
350,430 350,390 385,368 450,372 448,345 500,322 550,340 575,368 625,392 660,375 700,380 710,362 750,378 825,388 850,350 885,345 908,385 950,402 930,435 925,455 885,480
625,392 655,430 690,455 750,464 790,455 810,432 845,418 822,392 830,380
625,392 612,410 585,420 580,445 540,460 500,470 470,445 435,432 415,430 412,465
435,470 460,490 495,505 520,480 500,470
580,445 575,465 530,480 545,500 570,545 600,560 630,580 690,568 705,600
400,495 440,508 450,520 445,560 450,595
445,570 490,565 515,530 555,520 548,498 495,503
505,605 510,580 545,535 560,520
575,560 585,578 635,590 
635,590 665,578 660,600 662,620 640,610 635,590
665,620 690,570
705,600 735,612 765,628
705,600 715,635 698,650 705,700
715,635 745,645 760,680 735,685 735,700
725,620 745,640 770,680 760,700 745,705
300,448 345,455 360,468
330,460 335,480 365,485
340,480 345,510 360,568
275,510 345,505
275,540 300,535 355,565
300,535 312,508
268,560 285,555 290,540
325,655 350,658 385,648 410,635 412,605
335,475 280,512
85,505 100,540 98,605 140,620 200,635 200,552
202,622 285,622
140,620 130,655 130,700 190,708 188,640
98,605 60,640 -10,600 -65,585
-30,555 15,540 20,520
-8,600 -8,670 -55,670
-60,600 -55,590 -30,590 -28,570
60,640 60,680 20,700 -10,705 -60,665
60,682 120,688 130,700 110,740 90,750
-85,690 -60,685 -40,710 -20,740
-20,705 -5,740
10,700 12,738
35,700 35,735
45,695 47,735
130,700 135,730 190,705 250,740 225,745 150,745 130,760 95,762
190,708 255,705 285,655 330,690
255,705 262,745 310,750 350,722 365,698
310,750 312,780
262,745 268,770 240,775 235,830 265,845 268,855 305,850
130,760 125,805 115,815
120,820 180,825 185,860 230,862 225,830 180,825
180,860 180,895 112,895
180,897 215,900 255,880 265,855
172,900 172,965 200,958 230,930 215,900
230,930 255,935 250,960 240,968
165,900 165,980 150,985
255,880 265,890 270,872
215,988 225,980 230,988 220,998 215,988
268,782 300,805
994,795 996,838
778,770 810,770 828,742
718,735 728,740
1,750 2,752`;
const toPaths = s => s.trim().split('\n').map(l => 'M' + l.trim().split(/\s+/).join('L'));
function specks() {
  let s = 7, out = '';
  const rnd = () => (s = (s * 16807) % 2147483647) / 2147483647;
  for (let i = 0; i < 65; i++) {
    const x = 340 + rnd() * 230, y = 140 + rnd() * 230;
    out += `<ellipse cx="${x.toFixed(0)}" cy="${y.toFixed(0)}" rx="${(1 + rnd() * 2.5).toFixed(1)}" ry="${(.8 + rnd() * 1.4).toFixed(1)}"/>`;
  }
  for (let i = 0; i < 20; i++) out += `<ellipse cx="${(710 + rnd() * 100).toFixed(0)}" cy="${(295 + rnd() * 70).toFixed(0)}" rx="2.200" ry="1.400"/>`;
  for (let i = 0; i < 26; i++) out += `<ellipse cx="${(1410 + rnd() * 85).toFixed(0)}" cy="${(195 + rnd() * 95).toFixed(0)}" rx="2" ry="2.600"/>`;
  for (let i = 0; i < 18; i++) out += `<ellipse cx="${(1560 + rnd() * 520).toFixed(0)}" cy="${(90 + rnd() * 320).toFixed(0)}" rx="1.800" ry="1"/>`;
  return out;
}
define('world-map', () => `<style>
:host{display:block;width:800px;height:400px;flex:none;position:relative;overflow:hidden}
svg.m{display:block}
.z{position:absolute;left:9px;top:9px;width:24px;height:49px;border-radius:3px;background:#fff;box-shadow:0 0 2px 1px rgba(0,0,0,.25)}
.z div{height:24px;display:flex;align-items:center;justify-content:center}
.z div+div{border-top:1px solid #ccc}
.a{position:absolute;right:0;bottom:0;width:34px;height:14px;background:rgba(255,255,255,.7);font:8.800px/14px "Liberation Sans",Arial,sans-serif;color:#3e7fc0;display:flex;justify-content:center}
</style>
<svg class="m" width="800" height="400" viewBox="30 39 2400 1200"><defs><filter id="r" x="0" y="0" width="2450" height="1260" filterUnits="userSpaceOnUse"><feTurbulence type="fractalNoise" baseFrequency=".07" numOctaves="3" seed="4"/><feDisplacementMap in="SourceGraphic" scale="12" xChannelSelector="R" yChannelSelector="G"/></filter></defs>
<rect x="30" y="39" width="2400" height="1200" fill="#b5d0de"/>
<g filter="url(#r)"><rect x="0" y="0" width="2450" height="1260" fill="#b5d0de"/>
<g fill="#f0efe8"><path d="${toPaths(WEST).join('Z')}Z"/><path transform="translate(1200)" d="${toPaths(EAST).join('Z')}Z"/></g>
<g fill="none" stroke="#f0efe8" stroke-width="2" stroke-dasharray="4 7"><path d="M35 360L95 342M138 623l28 14M690 600l40 30M805 655q12 20 4 40M1018 485l45 12M2220 440l75-60M2120 605l-10 30M1865 680l-4 40M2260 800q60 25 90 85l20 30M2000 790l60-5M1380 480l20 10"/></g>
<g fill="#b5d0de">${specks()}
<path d="M378 182L400 158 424 165 405 188 388 186ZM435 250L445 232 484 222 460 245ZM380 165L420 175 400 192ZM545 340L556 345 566 380 556 370ZM600 412L625 400 655 415 640 420ZM630 462L632 430 648 422 640 440 638 462ZM648 422L680 430 685 445 672 455 660 430ZM662 464L690 452 690 458 668 468ZM685 445L710 440 708 446ZM1422 465L1430 432 1437 420 1455 432 1468 422 1500 412 1488 430 1516 460 1496 470 1450 462 1430 468ZM1555 432L1568 416 1590 417 1592 432 1575 448 1582 470 1600 490 1596 508 1568 505 1570 480 1558 458ZM1435 240L1450 242 1455 260 1440 262ZM1465 218L1478 225 1484 248 1470 242ZM1447 780L1462 776 1464 790 1450 792ZM1735 420L1775 416 1775 420 1740 428ZM735 705L744 700 742 718ZM458 465h6v6h-6ZM800 993h7v5h-7Z"/></g>
<g fill="none" stroke="#b5d0de" stroke-linecap="round"><path stroke-width="9" d="M1745 42L1765 70 1795 90M1738 120L1762 140M1745 122L1730 155 1705 162M1722 45v95"/><path stroke-width="6" d="M1978 320L1970 345 1945 365"/><path stroke-width="4" d="M290 285L330 330 345 355"/><path stroke-width="2" d="M2090 45Q2115 70 2085 100T2085 200L2110 215M1560 345l15-20 30-25M1920 285q15 15 10 40t20 20M1435 770l-5 50M800 780l30 20 60-15M1835 250l30 10"/></g>
</g>
<g fill="none" stroke="#829fc9" stroke-width="2.500"><path d="M640 404L665 430 668 450 662 464 690 455 710 442M1434 800v20l8 12M1464 845v25"/></g>
<g fill="none" stroke="#ccb9cc" stroke-width="2.800" stroke-linejoin="round"><path d="${toPaths(WEST_BORDERS).join('')}"/><path transform="translate(1200)" d="${toPaths(EAST_BORDERS).join('')}"/></g>
</svg>
<div class="z"><div><svg width="10" height="10" viewBox="0 0 10 10" stroke="#000" stroke-width="1.800"><path d="M5 0v10M0 5h10"/></svg></div><div><svg width="10" height="10" viewBox="0 0 10 10" stroke="#000" stroke-width="1.800"><path d="M0 5h10"/></svg></div></div>
<div class="a"><fit-text w="27">Leaflet</fit-text></div>`);

/* ---------- Page ---------- */
define('dash-page', () => `<style>
:host{display:block;padding-left:6px;height:1327px;background:#fff;color:#000;font:12.800px/20px "DejaVu Serif",serif;position:relative}
header{height:93px;display:flex;align-items:center;width:2474px;box-sizing:border-box;padding-left:1025px}
h1{margin:0;font:bold 25.600px/30px "DejaVu Serif",serif;white-space:nowrap}
header h1{margin:0 0 2px 35px}
.hr{height:1px;width:2474px;border-top:1px solid #4c4c4c;background:#868686}
.sub{height:44px;padding-top:18px}
rescue-filter{margin-bottom:3px;height:23px}
animal-table{margin-top:7px}
table-pager{margin:4px 0 26px}
.charts{display:flex;margin-top:7px}
footer{padding:10px 0 0 8px}
footer div{height:29.500px;line-height:20px;display:flex}
a{color:#551a8b;text-decoration:none}
.fab{position:absolute;right:27px;bottom:27px;width:51px;height:51px;border-radius:50%;background:#668dff}
</style>
<header><salvare-logo></salvare-logo><h1><fit-text w="364">SNHU CS-340 Dashboard</fit-text></h1></header>
<div class="hr"></div>
<div class="sub"><h1><fit-text w="242">Rescue Dog Type</fit-text></h1></div>
<rescue-filter></rescue-filter>
<div class="hr"></div>
<animal-table></animal-table>
<table-pager></table-pager>
<div class="hr"></div>
<div class="charts"><breed-chart></breed-chart><world-map></world-map></div>
<footer><div><fit-text w="180">Creator:Nicholas Kreuziger</fit-text></div><div><fit-text w="85.500">Github Link: </fit-text><a href="#"><fit-text underline w="50.500">Syncert</fit-text></a></div></footer>
<div class="fab"><svg width="51" height="51" viewBox="0 0 51 51" fill="none" stroke="#fff" stroke-width="3.200"><path d="M20 17.500l-8.500 8.500 8.500 8.500M32 17.500l8.500 8.500-8.500 8.500"/></svg></div>`);

define('browser-window', () => `<style>:host{display:block;flex:1;min-width:0}</style>
<browser-tabs></browser-tabs><browser-toolbar></browser-toolbar><dash-page></dash-page>`);

define('ubuntu-desktop', () => `<style>:host{display:block;width:2559px;height:1439px;overflow:hidden}main{display:flex}</style>
<top-panel></top-panel><main><side-dock></side-dock><browser-window></browser-window></main>`);
</script>
</body>
</html>
